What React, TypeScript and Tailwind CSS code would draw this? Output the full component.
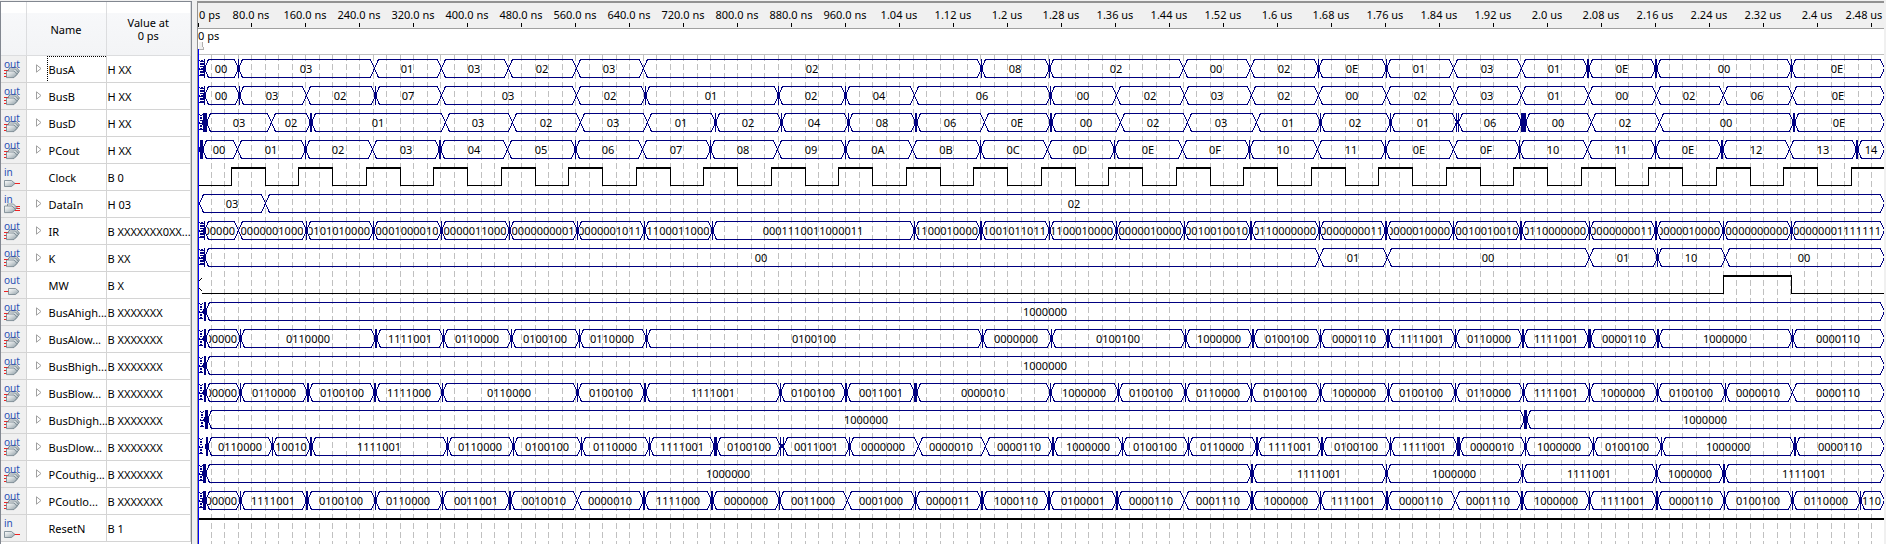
import React from "react";

type Seg = [start: number, bar: number, label: string];

type Signal = {
  name: string;
  value: string;
  dir: "in" | "out";
  bus: boolean;
  lead?: number[];
  segs?: Seg[];
  level?: [x: number, high: boolean][];
};

const ORIGIN = 198;
const END = 1884;
const ROW = 27;

/* Clock toggles every 33.75 px, low first. */
const clockLevels: [number, boolean][] = Array.from({ length: 50 }, (_, k) => [
  Math.floor(197.6 + 33.75 * k),
  k % 2 === 1,
]);

const signals: Signal[] = [
  {
    name: "BusA", value: "H XX", dir: "out", bus: true, lead: [199, 201],
    segs: [[204, 1, "00"], [238, 1, "03"], [374, 0, "01"], [441, 0, "03"], [508, 0, "02"], [576, 0, "03"], [643, 0, "02"], [981, 1, "08"], [1049, 1, "02"], [1183, 0, "00"], [1250, 0, "02"], [1318, 1, "0E"], [1386, 1, "01"], [1453, 0, "03"], [1521, 0, "01"], [1588, 2, "0E"], [1656, 2, "00"], [1791, 1, "0E"]],
  },
  {
    name: "BusB", value: "H XX", dir: "out", bus: true, lead: [199, 201],
    segs: [[204, 1, "00"], [239, 1, "03"], [306, 0, "02"], [375, 1, "07"], [441, 0, "03"], [576, 0, "02"], [645, 1, "01"], [778, 1, "02"], [845, 1, "04"], [914, 0, "06"], [1050, 1, "00"], [1116, 0, "02"], [1184, 0, "03"], [1251, 0, "02"], [1318, 0, "00"], [1386, 0, "02"], [1454, 0, "03"], [1521, 0, "01"], [1588, 0, "00"], [1656, 0, "02"], [1723, 0, "06"], [1792, 0, "0E"]],
  },
  {
    name: "BusD", value: "H XX", dir: "out", bus: true, lead: [199],
    segs: [[205, 4, "03"], [271, 0, "02"], [311, 2, "01"], [445, 0, "03"], [512, 0, "02"], [580, 0, "03"], [647, 0, "01"], [715, 1, "02"], [781, 1, "04"], [848, 1, "08"], [916, 2, "06"], [984, 0, "0E"], [1051, 2, "00"], [1120, 0, "02"], [1187, 0, "03"], [1256, 0, "01"], [1320, 1, "02"], [1390, 1, "01"], [1457, -3, "06"], [1523, 5, "00"], [1591, 0, "02"], [1659, 0, "00"], [1794, 2, "0E"]],
  },
  {
    name: "PCout", value: "H XX", dir: "out", bus: true,
    segs: [[201, 3, "00"], [237, 0, "01"], [305, 1, "02"], [372, 0, "03"], [440, 2, "04"], [507, 0, "05"], [575, 1, "06"], [642, 0, "07"], [710, 1, "08"], [777, 0, "09"], [845, 1, "0A"], [912, 0, "0B"], [980, 1, "0C"], [1047, 0, "0D"], [1114, 1, "0E"], [1182, 0, "0F"], [1249, 1, "10"], [1317, 0, "11"], [1385, 1, "0E"], [1453, 0, "0F"], [1519, 1, "10"], [1587, 0, "11"], [1655, 1, "0E"], [1722, 2, "12"], [1789, 0, "13"], [1857, 2, "14"]],
  },
  { name: "Clock", value: "B 0", dir: "in", bus: false, level: clockLevels },
  {
    name: "DataIn", value: "H 03", dir: "in", bus: true,
    segs: [[199, 0, "03"], [265, 0, "02"]],
  },
  {
    name: "IR", value: "B XXXXXXX0XX...", dir: "out", bus: true, lead: [199, 201],
    segs: [[204, 1, "00000"], [238, 0, "0000001000"], [306, 1, "0101010000"], [373, 1, "0001000010"], [441, 1, "0000011000"], [509, 1, "0000000001"], [577, 1, "0000001011"], [644, 1, "1100011000"], [712, 1, "0001110011000011"], [914, 1, "1100010000"], [981, 2, "1001011011"], [1049, 1, "1100010000"], [1116, 1, "0000010000"], [1184, 1, "0010010010"], [1251, 2, "0110000000"], [1319, 1, "0000000011"], [1386, 2, "0000010000"], [1453, 1, "0010010010"], [1521, 2, "0110000000"], [1589, 1, "0000000011"], [1656, 2, "0000010000"], [1723, 1, "0000000000"], [1791, 1, "00000001111111"]],
  },
  {
    name: "K", value: "B XX", dir: "out", bus: true, lead: [199, 201],
    segs: [[204, 1, "00"], [1319, 0, "01"], [1387, 0, "00"], [1589, 0, "01"], [1657, 1, "10"], [1725, 0, "00"]],
  },
  { name: "MW", value: "B X", dir: "out", bus: false, level: [[202, false], [1723, true], [1791, false]] },
  { name: "BusAhigh...", value: "B XXXXXXX", dir: "out", bus: true, lead: [199], segs: [[205, 2, "1000000"]] },
  {
    name: "BusAlow...", value: "B XXXXXXX", dir: "out", bus: true, lead: [199],
    segs: [[205, 2, "00000"], [240, 1, "0110000"], [376, 2, "1111001"], [443, 1, "0110000"], [511, 1, "0100100"], [579, 1, "0110000"], [646, 1, "0100100"], [982, 1, "0000000"], [1051, 1, "0100100"], [1185, 1, "1000000"], [1253, 2, "0100100"], [1320, 1, "0000110"], [1388, 2, "1111001"], [1455, 1, "0110000"], [1523, 2, "1111001"], [1589, 3, "0000110"], [1658, 2, "1000000"], [1792, 1, "0000110"]],
  },
  { name: "BusBhigh...", value: "B XXXXXXX", dir: "out", bus: true, lead: [199], segs: [[205, 2, "1000000"]] },
  {
    name: "BusBlow...", value: "B XXXXXXX", dir: "out", bus: true, lead: [199],
    segs: [[205, 2, "00000"], [240, 1, "0110000"], [308, 2, "0100100"], [375, 2, "1111000"], [442, 1, "0110000"], [577, 1, "0100100"], [645, 2, "1111001"], [780, 1, "0100100"], [846, 2, "0011001"], [915, 3, "0000010"], [1050, 1, "1000000"], [1118, 1, "0100100"], [1185, 1, "0110000"], [1251, 1, "0100100"], [1320, 1, "1000000"], [1388, 1, "0100100"], [1455, 1, "0110000"], [1523, 1, "1111001"], [1589, 1, "1000000"], [1657, 1, "0100100"], [1725, 1, "0000010"], [1792, 0, "0000110"]],
  },
  {
    name: "BusDhigh...", value: "B XXXXXXX", dir: "out", bus: true, lead: [200],
    segs: [[206, 3, "1000000"], [1525, 3, "1000000"]],
  },
  {
    name: "BusDlow...", value: "B XXXXXXX", dir: "out", bus: true, lead: [199],
    segs: [[207, 2, "0110000"], [272, 1, "10010"], [311, 2, "1111001"], [447, 1, "0110000"], [513, 1, "0100100"], [581, 1, "0110000"], [649, 1, "1111001"], [715, 3, "0100100"], [782, -4, "0011001"], [849, 1, "0000000"], [918, 0, "0000010"], [985, 0, "0000110"], [1053, 2, "1000000"], [1122, 1, "0100100"], [1188, 1, "0110000"], [1257, 2, "1111001"], [1322, 2, "0100100"], [1390, 1, "1111001"], [1458, 3, "0000010"], [1525, 1, "1000000"], [1593, 1, "0100100"], [1661, 1, "1000000"], [1795, 2, "0000110"]],
  },
  {
    name: "PCouthig...", value: "B XXXXXXX", dir: "out", bus: true, lead: [199],
    segs: [[204, 3, "1000000"], [1252, 2, "1111001"], [1386, 1, "1000000"], [1522, 1, "1111001"], [1656, 1, "1000000"], [1724, 2, "1111001"]],
  },
  {
    name: "PCoutlo...", value: "B XXXXXXX", dir: "out", bus: true, lead: [199],
    segs: [[204, 3, "00000"], [240, 1, "1111001"], [307, 2, "0100100"], [375, 1, "0110000"], [442, 1, "0011001"], [510, 2, "0010010"], [577, 0, "0000010"], [644, 2, "1111000"], [712, 2, "0000000"], [779, 1, "0011000"], [847, 0, "0001000"], [915, 1, "0000011"], [982, 2, "1000110"], [1049, 2, "0100001"], [1117, 2, "0000110"], [1184, 0, "0001110"], [1252, 2, "1000000"], [1320, 1, "1111001"], [1387, 2, "0000110"], [1455, 0, "0001110"], [1522, 2, "1000000"], [1589, 1, "1111001"], [1657, 2, "0000110"], [1724, 1, "0100100"], [1792, 1, "0110000"], [1860, 1, "110"]],
  },
  { name: "ResetN", value: "B 1", dir: "in", bus: false, level: [[198, true]] },
];

const ticks = Array.from({ length: 31 }, (_, i) => {
  const ns = (i + 1) * 80;
  if (ns < 1000) return `${ns}.0 ns`;
  const us = ns / 1000;
  return `${Number.isInteger(us) ? us.toFixed(1) : us} us`;
});

const TOP = 4;
const MID = 13;
const BOTTOM = 22;

function BusWave({ segs, lead = [] }: { segs: Seg[]; lead?: number[] }) {
  return (
    <>
      <g stroke="#000080" fill="none" shapeRendering="crispEdges">
        {lead.map((x) => (
          <path
            key={x}
            strokeDasharray="2 1"
            d={`M${x - ORIGIN + 0.5} ${TOP + 1}l3 8l-3 9M${x - ORIGIN + 3.5} ${TOP + 1}l-3 8l3 9`}
          />
        ))}
        {segs.map(([start, bar], i) => {
          const width = Math.abs(bar);
          const left = start - Math.floor(width / 2);
          const a = left + Math.max(width - 1, 0) - ORIGIN + 0.5;
          const next = segs[i + 1];
          const b = (next ? next[0] - Math.floor(Math.abs(next[1]) / 2) : END) - ORIGIN + 0.5;
          return (
            <path
              key={start}
              d={`M${a} ${MID + 0.5}L${a + 4} ${TOP + 0.5}H${b - 4}L${b} ${MID + 0.5}L${b - 4} ${BOTTOM + 0.5}H${a + 4}Z`}
            />
          );
        })}
      </g>
      <g fill="#000080" shapeRendering="crispEdges">
        {segs.map(([start, bar]) => {
          const width = Math.abs(bar);
          const x = start - Math.floor(width / 2) - ORIGIN;
          if (!width) return null;
          if (bar < 0)
            return (
              <g key={start}>
                <rect x={x} y={TOP} width={1} height={19} />
                <rect x={x + width - 1} y={TOP} width={1} height={19} />
                <rect x={x} y={MID - 2} width={width} height={4} />
              </g>
            );
          return (
            <g key={start}>
              <rect x={x} y={TOP} width={width} height={19} />
              <rect x={x - 1} y={MID - 2} width={width + 2} height={5} />
            </g>
          );
        })}
      </g>
      {segs.map(([start, bar, label], i) => {
        const from = start + Math.floor(Math.abs(bar) / 2) - ORIGIN + 3;
        const to = (segs[i + 1] ? segs[i + 1][0] : END) - ORIGIN - 3;
        const w = to - from;
        const tight = label.length * 6 > w - 2;
        return (
          <svg key={start} x={from} y={0} width={w} height={ROW}>
            <text x={tight ? w : Math.floor(w / 2)} y={18} textAnchor={tight ? "end" : "middle"} fill="#000">
              {label}
            </text>
          </svg>
        );
      })}
    </>
  );
}

function LevelWave({ level }: { level: [number, boolean][] }) {
  const steps = level.filter(([x]) => x < END);
  return (
    <g fill="#000" shapeRendering="crispEdges">
      {steps.map(([x, high], i) => {
        const end = steps[i + 1] ? steps[i + 1][0] : END;
        return (
          <g key={x}>
            <rect x={x - ORIGIN} y={high ? TOP : BOTTOM} width={end - x} height={high ? 2 : 1} />
            {i > 0 && <rect x={x - ORIGIN} y={TOP} width={1} height={19} />}
          </g>
        );
      })}
    </g>
  );
}

function PinIcon({ dir, bus }: { dir: "in" | "out"; bus: boolean }) {
  const out = dir === "out";
  return (
    <svg width="20" height="24" viewBox="0 -3 20 24" className="block" aria-hidden="true">
      <defs>
        <linearGradient id="pin" x1="0" y1="0" x2="1" y2="1">
          <stop offset="0" stopColor="#ffffff" />
          <stop offset="0.5" stopColor="#ccd3d6" />
          <stop offset="1" stopColor="#8b9ba4" />
        </linearGradient>
      </defs>
      {bus ? (
        <>
          {out ? (
            <path d="M1 10.5h4M1 13.5h4M1 16.5h4" stroke="#ee2222" />
          ) : (
            <path d="M12 11.5h5M12 13.5h5M12 15.5h5" stroke="#ee2222" />
          )}
          <g fill="url(#pin)" stroke="#6f7f89" strokeWidth="0.8">
            {out ? (
              <>
                <path d="M6.5 7.5h7l3 3.5-3 3.5h-7z" />
                <path d="M5.5 9h7l3 3.5-3 3.5h-7z" />
                <path d="M3.5 11h7.5l3 3.3-3 3.3H3.5z" />
              </>
            ) : (
              <>
                <path d="M4.5 9h6l3.5 3.5-3 3.5H4.5z" />
                <path d="M1.5 11h7.5l3.5 3.3-3.5 3.3H1.5z" />
              </>
            )}
          </g>
        </>
      ) : (
        <>
          <path d={out ? "M1 15.5h5" : "M11 15.5h6"} stroke="#ee2222" />
          <path
            d={out ? "M5.5 12.5h7l3.5 3-3.5 3h-7z" : "M1.5 12.5h7l3.5 3-3.5 3h-7z"}
            fill="url(#pin)"
            stroke="#6f7f89"
            strokeWidth="0.8"
          />
        </>
      )}
      <text x="1" y="8" fontSize="10" fill="#2a50b4">
        {dir}
      </text>
    </svg>
  );
}

export default function App() {
  const gridLines = Array.from({ length: 124 }, (_, k) => Math.floor(13.5 * (k + 1) - 0.4));
  return (
    <div className="flex min-h-screen bg-[#f0f0f0] pt-px pr-[2px] text-[11px] leading-[13px] text-black [font-family:'Noto_Sans',sans-serif]">
      <section className="w-48 shrink-0 border-t border-r border-l border-[#828790] bg-white" aria-label="Signals">
        <table className="w-full table-fixed border-collapse">
          <colgroup>
            <col className="w-[25px]" />
            <col className="w-20" />
            <col />
          </colgroup>
          <thead>
            <tr className="h-[53px] bg-linear-to-b from-white from-20% via-[#f7f8fa] via-20% to-[#f3f4f6]">
              <th className="border-r border-b border-[#dcdddf] p-0" aria-label="Direction" />
              <th className="border-r border-b border-[#dcdddf] p-0 pt-[2px] font-normal">Name</th>
              <th className="border-r border-b border-[#dcdddf] p-0 pt-[2px] font-normal">
                Value at
                <br />0 ps
              </th>
            </tr>
          </thead>
          <tbody>
            {signals.map((s, i) => (
              <tr key={s.name} className="h-[27px]">
                <td className="border-r border-b border-[#d4d4d4] bg-[#f0f0f0] p-0 pl-[2px]">
                  <PinIcon dir={s.dir} bus={s.bus} />
                </td>
                <td className="border-r border-b border-[#d4d4d4] p-0">
                  <div className="flex h-[25px] items-center">
                    <span className="flex w-5 shrink-0 justify-end pr-[5px]">
                      {s.bus && (
                        <button type="button" aria-label={`Expand ${s.name}`} className="block">
                          <svg width="6" height="9" viewBox="0 0 6 9" className="block">
                            <path d="M0.5 0.8L5 4.5L0.5 8.2z" fill="#fff" stroke="#a0a0a0" />
                          </svg>
                        </button>
                      )}
                    </span>
                    <span
                      className={
                        i === 0
                          ? "flex h-full flex-1 items-center border-t border-l border-dotted border-black pl-px whitespace-nowrap"
                          : "flex h-full flex-1 items-center pt-px pl-[2px] whitespace-nowrap"
                      }
                    >
                      {s.name}
                    </span>
                  </div>
                </td>
                <td className="border-r border-b border-[#d4d4d4] p-0 pt-px pl-px whitespace-nowrap">{s.value}</td>
              </tr>
            ))}
          </tbody>
        </table>
      </section>

      <section
        className="ml-[5px] flex min-w-0 flex-1 flex-col overflow-hidden border-t-2 border-l border-[#929292] bg-white"
        aria-label="Waveforms"
      >
        <div className="flex h-[26px] shrink-0 overflow-hidden border-b border-[#a0a0a0] bg-[#f0f0f0] whitespace-nowrap">
          <div className="flex h-full w-[26px] shrink-0 flex-col justify-between pt-[5px]">
            <span className="pl-px">0 ps</span>
            <span className="mb-px h-1 w-px bg-black" />
          </div>
          {ticks.map((t, i) => (
            <div
              key={t}
              className={
                i === ticks.length - 1
                  ? "flex h-full w-10 shrink-0 flex-col justify-between pt-[5px]"
                  : "flex h-full w-[54px] shrink-0 flex-col justify-between pt-[5px]"
              }
            >
              <span className="text-center">{t}</span>
              <span className="mb-px ml-[27px] h-1 w-px bg-black" />
            </div>
          ))}
        </div>
        <div className="relative h-[26px] shrink-0 border-b border-[#c0c0c0]">
          <span className="block">0 ps</span>
          <svg width="6" height="9" className="absolute top-[13px] left-px" aria-hidden="true" shapeRendering="crispEdges">
            <path d="M0 0h3v5h2v3H0z" fill="#f0f0f0" />
            <path d="M3.5 0v5M4.5 5v3M0 7.5h5" stroke="#b0b0b0" fill="none" />
          </svg>
          <span className="absolute bottom-[-1px] left-0 h-[6px] w-px bg-[#0000ff]" />
        </div>
        <svg className="block min-h-[487px] w-full flex-1" role="img" aria-label="Signal waveforms over time">
          <g stroke="#c0c0c0" strokeDasharray="6 3" shapeRendering="crispEdges">
            {gridLines.map((x) => (
              <line key={x} x1={x + 0.5} x2={x + 0.5} y1="0" y2="100%" />
            ))}
          </g>
          {signals.map((s, i) => (
            <svg key={s.name} y={i * ROW} width="100%" height={ROW}>
              {s.segs && <BusWave segs={s.segs} lead={s.lead} />}
              {s.level && <LevelWave level={s.level} />}
              {s.name === "MW" && (
                <path d="M3.5 7l-2 3M1.5 17l2 3" stroke="#000" shapeRendering="crispEdges" />
              )}
            </svg>
          ))}
          <rect width="1" height="100%" fill="#0000ff" />
        </svg>
      </section>
    </div>
  );
}
